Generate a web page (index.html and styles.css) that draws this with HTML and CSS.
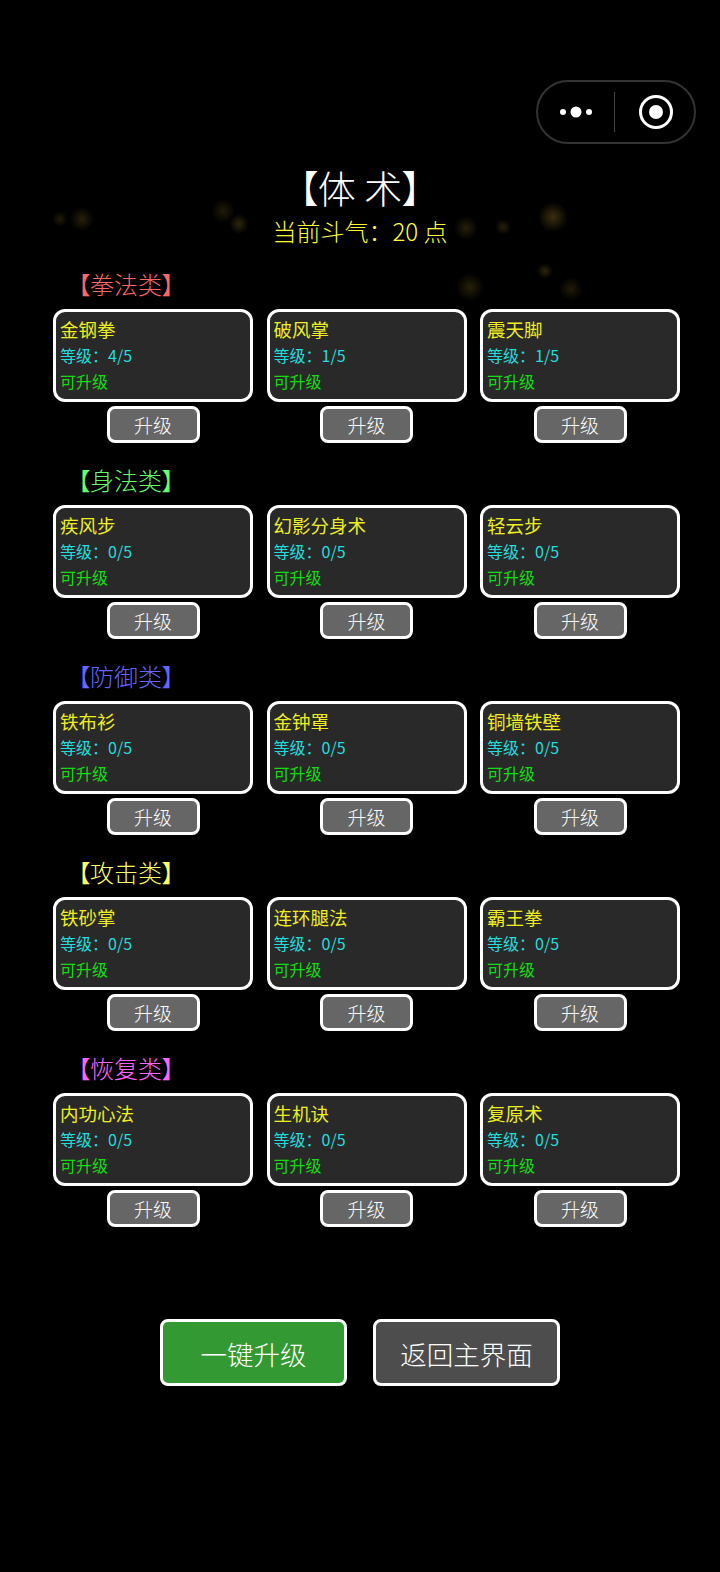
FILE: index.html
```html
<!DOCTYPE html>
<html lang="zh-CN">
<head>
    <meta charset="UTF-8">
    <meta name="viewport" content="width=device-width, initial-scale=1.0">
    <title>体术</title>
    <link rel="stylesheet" href="styles.css">
</head>
<body>
    <div class="page">
        <div class="glows">
            <span class="glow g1"></span><span class="glow g2"></span><span class="glow g3"></span>
            <span class="glow g4"></span><span class="glow g5"></span><span class="glow g6"></span>
            <span class="glow g7"></span><span class="glow g8"></span><span class="glow g9"></span>
            <span class="glow g10"></span>
        </div>

        <div class="capsule">
            <svg class="capsule-more" width="36" height="14" viewBox="0 0 36 14">
                <circle cx="5" cy="7" r="3" fill="#fff"/>
                <circle cx="18" cy="7" r="5.5" fill="#fff"/>
                <circle cx="31" cy="7" r="3" fill="#fff"/>
            </svg>
            <div class="capsule-line"></div>
            <svg class="capsule-close" width="36" height="36" viewBox="0 0 36 36">
                <circle cx="18" cy="18" r="15.5" fill="none" stroke="#fff" stroke-width="3"/>
                <circle cx="18" cy="18" r="7" fill="#fff"/>
            </svg>
        </div>

        <div class="header">
            <h1 class="title">【体 术】</h1>
            <div class="points">当前斗气：20 点</div>
        </div>

        <div class="section">
            <h2 class="section-title red">【拳法类】</h2>
            <div class="skills">
                <div class="skill">
                    <div class="card"><div class="name">金钢拳</div><div class="level">等级：4/5</div><div class="status">可升级</div></div>
                    <button class="up-btn">升级</button>
                </div>
                <div class="skill">
                    <div class="card"><div class="name">破风掌</div><div class="level">等级：1/5</div><div class="status">可升级</div></div>
                    <button class="up-btn">升级</button>
                </div>
                <div class="skill">
                    <div class="card"><div class="name">震天脚</div><div class="level">等级：1/5</div><div class="status">可升级</div></div>
                    <button class="up-btn">升级</button>
                </div>
            </div>
        </div>

        <div class="section">
            <h2 class="section-title green">【身法类】</h2>
            <div class="skills">
                <div class="skill">
                    <div class="card"><div class="name">疾风步</div><div class="level">等级：0/5</div><div class="status">可升级</div></div>
                    <button class="up-btn">升级</button>
                </div>
                <div class="skill">
                    <div class="card"><div class="name">幻影分身术</div><div class="level">等级：0/5</div><div class="status">可升级</div></div>
                    <button class="up-btn">升级</button>
                </div>
                <div class="skill">
                    <div class="card"><div class="name">轻云步</div><div class="level">等级：0/5</div><div class="status">可升级</div></div>
                    <button class="up-btn">升级</button>
                </div>
            </div>
        </div>

        <div class="section">
            <h2 class="section-title blue">【防御类】</h2>
            <div class="skills">
                <div class="skill">
                    <div class="card"><div class="name">铁布衫</div><div class="level">等级：0/5</div><div class="status">可升级</div></div>
                    <button class="up-btn">升级</button>
                </div>
                <div class="skill">
                    <div class="card"><div class="name">金钟罩</div><div class="level">等级：0/5</div><div class="status">可升级</div></div>
                    <button class="up-btn">升级</button>
                </div>
                <div class="skill">
                    <div class="card"><div class="name">铜墙铁壁</div><div class="level">等级：0/5</div><div class="status">可升级</div></div>
                    <button class="up-btn">升级</button>
                </div>
            </div>
        </div>

        <div class="section">
            <h2 class="section-title yellow">【攻击类】</h2>
            <div class="skills">
                <div class="skill">
                    <div class="card"><div class="name">铁砂掌</div><div class="level">等级：0/5</div><div class="status">可升级</div></div>
                    <button class="up-btn">升级</button>
                </div>
                <div class="skill">
                    <div class="card"><div class="name">连环腿法</div><div class="level">等级：0/5</div><div class="status">可升级</div></div>
                    <button class="up-btn">升级</button>
                </div>
                <div class="skill">
                    <div class="card"><div class="name">霸王拳</div><div class="level">等级：0/5</div><div class="status">可升级</div></div>
                    <button class="up-btn">升级</button>
                </div>
            </div>
        </div>

        <div class="section">
            <h2 class="section-title pink">【恢复类】</h2>
            <div class="skills">
                <div class="skill">
                    <div class="card"><div class="name">内功心法</div><div class="level">等级：0/5</div><div class="status">可升级</div></div>
                    <button class="up-btn">升级</button>
                </div>
                <div class="skill">
                    <div class="card"><div class="name">生机诀</div><div class="level">等级：0/5</div><div class="status">可升级</div></div>
                    <button class="up-btn">升级</button>
                </div>
                <div class="skill">
                    <div class="card"><div class="name">复原术</div><div class="level">等级：0/5</div><div class="status">可升级</div></div>
                    <button class="up-btn">升级</button>
                </div>
            </div>
        </div>

        <div class="footer">
            <button class="big-btn btn-green">一键升级</button>
            <button class="big-btn btn-gray">返回主界面</button>
        </div>
    </div>
</body>
</html>
```

FILE: styles.css
```css
html, body {
    margin: 0;
    padding: 0;
    background-color: #000;
}
.page {
    position: relative;
    width: 720px;
    height: 1572px;
    overflow: hidden;
    font-family: "Noto Sans CJK SC", "Noto Sans", sans-serif;
    font-weight: 400;
    padding-top: 162px;
    box-sizing: border-box;
}

/* background sparkles */
.glow {
    position: absolute;
    border-radius: 50%;
    background: radial-gradient(circle, rgba(130, 105, 30, 0.5) 0%, rgba(130, 105, 30, 0.18) 45%, rgba(130, 105, 30, 0) 72%);
}
.g1 { left: 52px; top: 211px; width: 16px; height: 16px; opacity: 0.5; }
.g2 { left: 70px; top: 207px; width: 24px; height: 24px; opacity: 0.6; }
.g3 { left: 211px; top: 199px; width: 24px; height: 24px; opacity: 0.5; }
.g4 { left: 229px; top: 214px; width: 20px; height: 20px; opacity: 0.7; }
.g5 { left: 454px; top: 216px; width: 24px; height: 24px; opacity: 0.6; }
.g6 { left: 495px; top: 219px; width: 16px; height: 16px; opacity: 0.6; }
.g7 { left: 538px; top: 202px; width: 30px; height: 30px; opacity: 0.9; }
.g8 { left: 537px; top: 263px; width: 16px; height: 16px; opacity: 0.7; }
.g9 { left: 456px; top: 273px; width: 28px; height: 28px; opacity: 0.6; }
.g10 { left: 559px; top: 277px; width: 24px; height: 24px; opacity: 0.5; }

/* mini program capsule */
.capsule {
    position: absolute;
    left: 536px;
    top: 80px;
    width: 160px;
    height: 64px;
    box-sizing: border-box;
    border: 2px solid #333;
    border-radius: 32px;
    display: flex;
    align-items: center;
}
.capsule-more {
    margin-left: 20px;
}
.capsule-line {
    width: 1px;
    height: 40px;
    margin-left: 20px;
    background-color: #444;
}
.capsule-close {
    margin-left: 23px;
}

.header {
    position: relative;
    text-align: center;
}
.title {
    margin: 0;
    height: 51px;
    line-height: 50px;
    font-size: 38px;
    font-weight: 300;
    font-feature-settings: "palt";
    color: #fff;
}
.points {
    height: 36px;
    line-height: 36px;
    font-size: 24px;
    font-weight: 300;
    color: #ffff33;
}

.section {
    position: relative;
    height: 196px;
}
.section-title {
    margin: 0 0 0 78px;
    height: 40px;
    line-height: 40px;
    font-size: 24px;
    font-weight: 300;
    font-feature-settings: "palt";
}
.header + .section {
    margin-top: 15px;
}
.red { color: #ff6666; }
.green { color: #66ff66; }
.blue { color: #6666ff; }
.yellow { color: #ffff66; }
.pink { color: #ff66ff; }

.skills {
    display: flex;
    gap: 13.5px;
    margin-left: 53px;
    margin-top: 5px;
}
.skill {
    width: 200px;
    display: flex;
    flex-direction: column;
    align-items: center;
    gap: 4px;
}
.card {
    width: 100%;
    height: 93px;
    box-sizing: border-box;
    padding: 4px 4px;
    background-color: #292929;
    border: 3px solid #fff;
    border-radius: 12px;
}
.name {
    font-size: 18.5px;
    line-height: 27px;
    color: #eeee22;
}
.level {
    font-size: 16px;
    line-height: 24px;
    color: #22dddd;
}
.status {
    font-size: 16px;
    line-height: 28px;
    color: #11dd11;
}
.up-btn {
    width: 93px;
    height: 37px;
    padding: 0;
    box-sizing: border-box;
    background-color: #666;
    color: #fff;
    border: 3px solid #fff;
    border-radius: 8px;
    font-family: inherit;
    font-weight: 300;
    font-size: 19px;
}

.footer {
    display: flex;
    justify-content: center;
    gap: 26px;
    margin-top: 75px;
}
.big-btn {
    width: 187px;
    height: 67px;
    padding: 2px 0 0;
    box-sizing: border-box;
    border: 3px solid #fff;
    border-radius: 8px;
    color: #fff;
    font-family: inherit;
    font-weight: 300;
    font-size: 26.5px;
}
.btn-green {
    background-color: #339933;
}
.btn-gray {
    background-color: #4d4d4d;
}
```
